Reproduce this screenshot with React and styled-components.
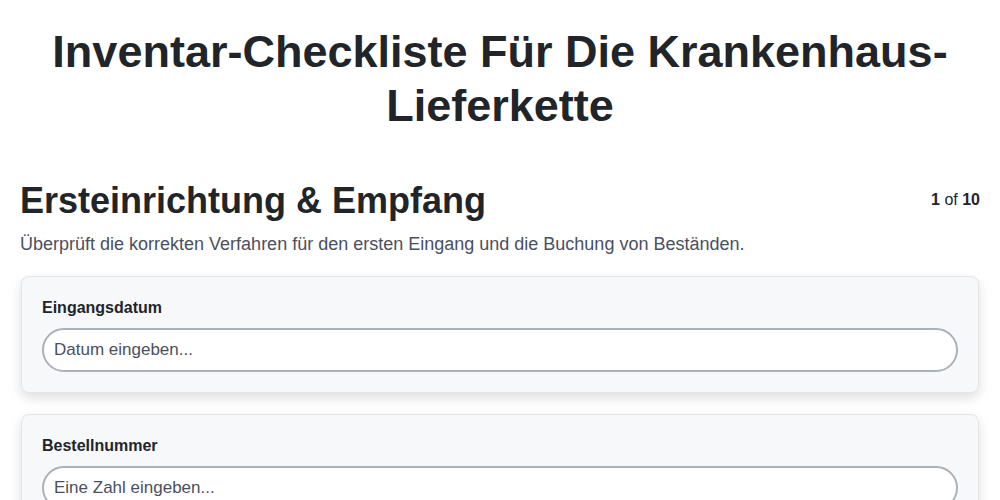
import styled, { createGlobalStyle } from "styled-components";

const GlobalStyle = createGlobalStyle`
  body {
    margin: 0;
    font-family: "Liberation Sans", Arial, sans-serif;
    color: #212529;
    background: #ffffff;
  }
`;

const Page = styled.div`
  padding: 0 20px 20px;
`;

const Title = styled.h1`
  text-align: center;
  font-size: 45px;
  line-height: 54px;
  font-weight: 700;
  margin: 25px 0 46px;
  padding: 0 30px;
`;

const SectionHeader = styled.div`
  display: flex;
  justify-content: space-between;
  align-items: flex-start;
`;

const SectionTitle = styled.h2`
  font-size: 36px;
  line-height: 44px;
  margin: 0;
  font-weight: 700;
`;

const Progress = styled.div`
  font-size: 16px;
  margin-top: 12px;
  b {
    font-weight: 700;
  }
`;

const Description = styled.p`
  font-size: 18px;
  line-height: 20px;
  color: #4a5060;
  margin: 11px 0 22px;
`;

const Card = styled.div`
  background: #f7f8fa;
  border: 1px solid #e3e5e9;
  border-radius: 8px;
  box-shadow: 0 5px 12px rgba(0, 0, 0, 0.13);
  padding: 22px 20px 20px;
  margin: 0 1px 21px;
`;

const Label = styled.label`
  display: block;
  font-size: 16px;
  font-weight: 700;
  margin-bottom: 11px;
`;

const Input = styled.input`
  box-sizing: border-box;
  width: 100%;
  height: 44px;
  border: 2px solid #aab1b9;
  border-radius: 22px;
  padding: 0 10px;
  font-family: inherit;
  font-size: 17px;
  background: #fff;
  color: #212529;
  outline: none;
  &::placeholder {
    color: #4a5060;
  }
`;

const fields = [
  { label: "Eingangsdatum", placeholder: "Datum eingeben..." },
  { label: "Bestellnummer", placeholder: "Eine Zahl eingeben..." },
];

export default function App() {
  return (
    <Page>
      <GlobalStyle />
      <Title>Inventar-Checkliste Für Die Krankenhaus-Lieferkette</Title>
      <SectionHeader>
        <SectionTitle>Ersteinrichtung &amp; Empfang</SectionTitle>
        <Progress>
          <b>1</b> of <b>10</b>
        </Progress>
      </SectionHeader>
      <Description>
        Überprüft die korrekten Verfahren für den ersten Eingang und die Buchung von Beständen.
      </Description>
      {fields.map((f) => (
        <Card key={f.label}>
          <Label>{f.label}</Label>
          <Input placeholder={f.placeholder} />
        </Card>
      ))}
    </Page>
  );
}
